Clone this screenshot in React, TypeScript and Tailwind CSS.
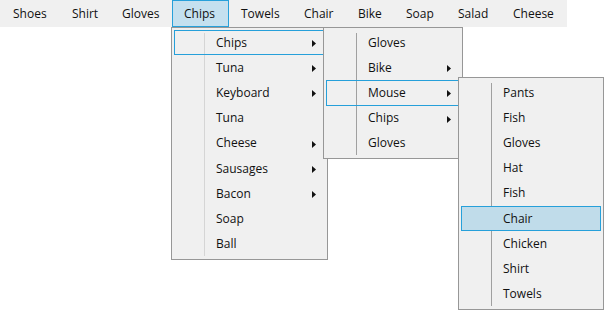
import React from 'react';

type Item = { label: string; sub?: boolean; state?: 'focus' | 'active' };

const barItems: { label: string; w: number; active?: boolean }[] = [
  { label: 'Shoes', w: 59 },
  { label: 'Shirt', w: 50 },
  { label: 'Gloves', w: 62 },
  { label: 'Chips', w: 57, active: true },
  { label: 'Towels', w: 63 },
  { label: 'Chair', w: 54 },
  { label: 'Bike', w: 48 },
  { label: 'Soap', w: 52 },
  { label: 'Salad', w: 55 },
  { label: 'Cheese', w: 66 },
];

const menu1: Item[] = [
  { label: 'Chips', sub: true, state: 'focus' },
  { label: 'Tuna', sub: true },
  { label: 'Keyboard', sub: true },
  { label: 'Tuna' },
  { label: 'Cheese', sub: true },
  { label: 'Sausages', sub: true },
  { label: 'Bacon', sub: true },
  { label: 'Soap' },
  { label: 'Ball' },
];

const menu2: Item[] = [
  { label: 'Gloves' },
  { label: 'Bike', sub: true },
  { label: 'Mouse', sub: true, state: 'focus' },
  { label: 'Chips', sub: true },
  { label: 'Gloves' },
];

const menu3: Item[] = [
  { label: 'Pants' },
  { label: 'Fish' },
  { label: 'Gloves' },
  { label: 'Hat' },
  { label: 'Fish' },
  { label: 'Chair', state: 'active' },
  { label: 'Chicken' },
  { label: 'Shirt' },
  { label: 'Towels' },
];

function Arrow() {
  return (
    <svg width="4" height="7" viewBox="0 0 4 7" className="absolute right-[8px] top-[9px]">
      <path d="M0 0 L4 3.5 L0 7 Z" fill="#111" />
    </svg>
  );
}

function MenuRow({ item }: { item: Item }) {
  const box =
    item.state === 'active'
      ? 'border-[#26a0da] bg-[#c0dcea]'
      : item.state === 'focus'
        ? 'border-[#26a0da] bg-transparent'
        : 'border-transparent';
  return (
    <div className={`relative h-[25.2px] border ${box} flex items-center pl-[41px] text-[12px] text-[#111]`}>
      <span className="leading-none">{item.label}</span>
      {item.sub && <Arrow />}
    </div>
  );
}

// popup menu: overlays the page, so it is positioned
function Menu({
  items,
  className,
  sepColor,
}: {
  items: Item[];
  className: string;
  sepColor: string;
}) {
  return (
    <div className={`absolute flex flex-col border border-[#979797] bg-[#f0f0f0] p-[2px] ${className}`}>
      <div className={`absolute left-[32px] top-[5px] bottom-[3px] w-px ${sepColor}`} />
      {items.map((it, i) => (
        <MenuRow key={i} item={it} />
      ))}
    </div>
  );
}

export default function App() {
  return (
    <div
      className="relative w-[613px] h-[321px] bg-white overflow-hidden"
      style={{ fontFamily: '"Open Sans", "Noto Sans CJK SC", sans-serif' }}
    >
      <div className="flex w-[567px] h-[27px] bg-[#f0f0f0] pl-px">
        {barItems.map((b) => (
          <div
            key={b.label}
            style={{ width: b.w }}
            className={`h-[27px] flex items-center px-[11px] text-[12px] text-[#111] border ${
              b.active ? 'border-[#26a0da] bg-[#c4e0ef]' : 'border-transparent'
            }`}
          >
            {b.label}
          </div>
        ))}
      </div>

      <Menu items={menu1} className="left-[171px] top-[27px] w-[157px]" sepColor="bg-[#d5d5d5]" />
      <Menu items={menu2} className="left-[323px] top-[27px] w-[140px]" sepColor="bg-[#a0a0a0]" />
      <Menu items={menu3} className="left-[458px] top-[77px] w-[146px]" sepColor="bg-[#a0a0a0]" />
    </div>
  );
}
